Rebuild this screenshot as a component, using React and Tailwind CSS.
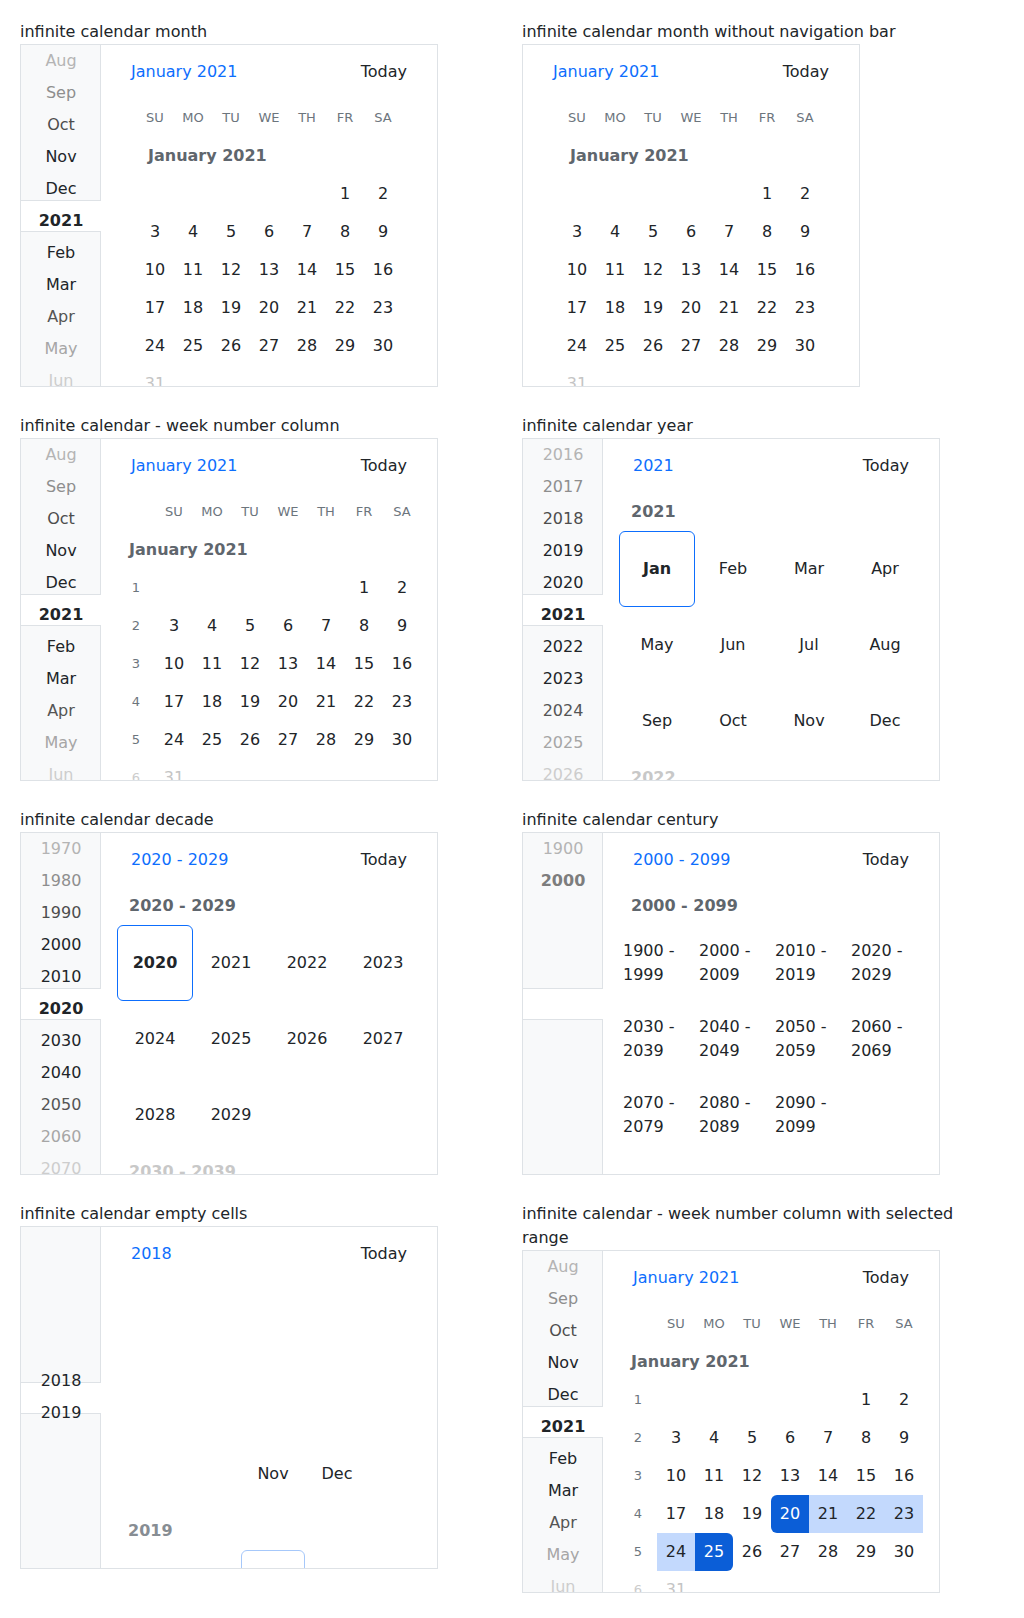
const DARK = "text-[#212529]";
const DAYS = ["SU", "MO", "TU", "WE", "TH", "FR", "SA"];
const WEEKS = [
  [0, 0, 0, 0, 0, 1, 2],
  [3, 4, 5, 6, 7, 8, 9],
  [10, 11, 12, 13, 14, 15, 16],
  [17, 18, 19, 20, 21, 22, 23],
  [24, 25, 26, 27, 28, 29, 30],
  [31, 0, 0, 0, 0, 0, 0],
];
const MONTHS = ["Jan", "Feb", "Mar", "Apr", "May", "Jun", "Jul", "Aug", "Sep", "Oct", "Nov", "Dec"];
const DECADE = ["2020", "2021", "2022", "2023", "2024", "2025", "2026", "2027", "2028", "2029"];
const CENTURY = [
  "1900 - 1999", "2000 - 2009", "2010 - 2019", "2020 - 2029",
  "2030 - 2039", "2040 - 2049", "2050 - 2059", "2060 - 2069",
  "2070 - 2079", "2080 - 2089", "2090 - 2099",
];

const MONTH_SIDE = [
  ["Aug", "text-[#b4b4b4]"],
  ["Sep", "text-[#8e8e8e]"],
  ["Oct", "text-[#4d4d4d]"],
  ["Nov", DARK],
  ["Dec", DARK],
  ["2021", "font-bold " + DARK],
  ["Feb", DARK],
  ["Mar", DARK],
  ["Apr", "text-[#555555]"],
  ["May", "text-[#a6a6a6]"],
  ["Jun", "text-[#cdcdcd]"],
];
const YEAR_SIDE = [
  ["2016", "text-[#b4b4b4]"],
  ["2017", "text-[#8e8e8e]"],
  ["2018", "text-[#4d4d4d]"],
  ["2019", DARK],
  ["2020", DARK],
  ["2021", "font-bold " + DARK],
  ["2022", DARK],
  ["2023", DARK],
  ["2024", "text-[#555555]"],
  ["2025", "text-[#a6a6a6]"],
  ["2026", "text-[#cdcdcd]"],
];
const DECADE_SIDE = [
  ["1970", "text-[#b4b4b4]"],
  ["1980", "text-[#8e8e8e]"],
  ["1990", "text-[#4d4d4d]"],
  ["2000", DARK],
  ["2010", DARK],
  ["2020", "font-bold " + DARK],
  ["2030", DARK],
  ["2040", DARK],
  ["2050", "text-[#555555]"],
  ["2060", "text-[#a6a6a6]"],
  ["2070", "text-[#cdcdcd]"],
];

function Example({ title, children }) {
  return (
    <div>
      <div className="max-w-[440px] text-base leading-6">{title}</div>
      {children}
    </div>
  );
}

function Frame({ width = "w-[418px]", children }) {
  return (
    <div className={`flex h-[343px] overflow-hidden border border-[#dee2e6] bg-white ${width}`}>
      {children}
    </div>
  );
}

function Sidebar({ items, listClass = "" }) {
  return (
    <div className="relative w-[80px] shrink-0">
      <div className="absolute inset-0 flex flex-col">
        <div className="h-[156px] border-r border-b border-[#dee2e6] bg-[#f8f9fa]" />
        <div className="h-[30px]" />
        <div className="flex-1 border-r border-t border-[#dee2e6] bg-[#f8f9fa]" />
      </div>
      <ul className={`relative ${listClass}`}>
        {items.map(([label, cls]) => (
          <li key={label} className={`flex h-8 items-center justify-center ${cls}`}>
            {label}
          </li>
        ))}
      </ul>
    </div>
  );
}

function Header({ title }) {
  return (
    <div className="flex h-[54px] items-center justify-between px-[30px]">
      <span className="text-[#0d6efd]">{title}</span>
      <span className={DARK}>Today</span>
    </div>
  );
}

function Label({ children, faded = false }) {
  return (
    <div className={`flex h-[38px] items-center pl-3 font-bold ${faded ? "text-[#c8c8c8]" : "text-[#5f666d]"}`}>
      {children}
    </div>
  );
}

function rangeClass(day) {
  if (day === 20) return "rounded-l-md bg-[#0b5ed7] text-white";
  if (day === 25) return "rounded-r-md bg-[#0b5ed7] text-white";
  if (day >= 21 && day <= 24) return "bg-[#c3d9fd]";
  return "";
}

function MonthView({ weekNumbers = false, range = false }) {
  return (
    <div className="min-w-0 flex-1">
      <Header title="January 2021" />
      <div className="flex h-[38px] items-center justify-center text-[13px] text-[#6c757d]">
        {weekNumbers && <div className="w-[38px]" />}
        {DAYS.map((d) => (
          <div key={d} className="w-[38px] text-center">{d}</div>
        ))}
      </div>
      <div className={`mx-auto ${weekNumbers ? "w-[304px]" : "w-[266px]"}`}>
        <Label>January 2021</Label>
        {WEEKS.map((week, i) => (
          <div key={i} className={`flex h-[38px] ${i === 5 ? "text-[#c4c4c4]" : DARK}`}>
            {weekNumbers && (
              <div className={`flex w-[38px] items-center justify-center text-[13px] ${i === 5 ? "text-[#cccccc]" : "text-[#6c757d]"}`}>
                {i + 1}
              </div>
            )}
            {week.map((day, j) => (
              <div
                key={j}
                className={`flex w-[38px] items-center justify-center ${range ? rangeClass(day) : ""}`}
              >
                {day || ""}
              </div>
            ))}
          </div>
        ))}
      </div>
    </div>
  );
}

function YearView() {
  return (
    <div className="min-w-0 flex-1">
      <Header title="2021" />
      <div className="mx-auto w-[304px]">
        <Label>2021</Label>
        <div className={`grid grid-cols-4 ${DARK}`}>
          {MONTHS.map((m, i) => (
            <div
              key={m}
              className={`flex h-[76px] items-center justify-center ${i === 0 ? "rounded-md border border-[#0d6efd] font-bold" : ""}`}
            >
              {m}
            </div>
          ))}
        </div>
        <Label faded>2022</Label>
      </div>
    </div>
  );
}

function DecadeView() {
  return (
    <div className="min-w-0 flex-1">
      <Header title="2020 - 2029" />
      <div className="mx-auto w-[304px]">
        <Label>2020 - 2029</Label>
        <div className={`grid grid-cols-4 ${DARK}`}>
          {DECADE.map((y, i) => (
            <div
              key={y}
              className={`flex h-[76px] items-center justify-center ${i === 0 ? "rounded-md border border-[#0d6efd] font-bold" : ""}`}
            >
              {y}
            </div>
          ))}
        </div>
        <Label faded>2030 - 2039</Label>
      </div>
    </div>
  );
}

function CenturyView() {
  return (
    <div className="min-w-0 flex-1">
      <Header title="2000 - 2099" />
      <div className="mx-auto w-[304px]">
        <Label>2000 - 2099</Label>
        <div className={`grid grid-cols-4 ${DARK}`}>
          {CENTURY.map((c) => (
            <div key={c} className="flex h-[76px] items-center p-1 text-left leading-6">
              {c}
            </div>
          ))}
        </div>
      </div>
    </div>
  );
}

function EmptyCellsView() {
  return (
    <div className="min-w-0 flex-1">
      <Header title="2018" />
      <div className="h-[155px]" />
      <div className={`grid grid-cols-[repeat(4,64px)] pl-3 ${DARK}`}>
        <div />
        <div />
        <div className="flex h-[76px] items-center justify-center">Nov</div>
        <div className="flex h-[76px] items-center justify-center">Dec</div>
      </div>
      <div className="flex h-[38px] items-center pl-[27px] font-bold text-[#878d93]">2019</div>
      <div className="grid grid-cols-[repeat(4,64px)] pl-3">
        <div />
        <div />
        <div className="h-[76px] rounded-md border border-[#a6c8fa]" />
      </div>
    </div>
  );
}

export default function App() {
  return (
    <div className="min-h-[1618px] bg-white px-5 pt-5 font-['DejaVu_Sans',sans-serif] text-[#212529]">
      <div className="grid grid-cols-[482px_482px] items-start gap-x-5 gap-y-[27px]">
        <Example title="infinite calendar month">
          <Frame>
            <Sidebar items={MONTH_SIDE} />
            <MonthView />
          </Frame>
        </Example>
        <Example title="infinite calendar month without navigation bar">
          <Frame width="w-[338px]">
            <MonthView />
          </Frame>
        </Example>

        <Example title="infinite calendar - week number column">
          <Frame>
            <Sidebar items={MONTH_SIDE} />
            <MonthView weekNumbers />
          </Frame>
        </Example>
        <Example title="infinite calendar year">
          <Frame>
            <Sidebar items={YEAR_SIDE} />
            <YearView />
          </Frame>
        </Example>

        <Example title="infinite calendar decade">
          <Frame>
            <Sidebar items={DECADE_SIDE} />
            <DecadeView />
          </Frame>
        </Example>
        <Example title="infinite calendar century">
          <Frame>
            <Sidebar
              items={[
                ["1900", "text-[#b4b4b4]"],
                ["2000", "font-bold text-[#7d7d7d]"],
              ]}
            />
            <CenturyView />
          </Frame>
        </Example>

        <Example title="infinite calendar empty cells">
          <Frame>
            <Sidebar items={[["2018", DARK], ["2019", DARK]]} listClass="pt-[138px]" />
            <EmptyCellsView />
          </Frame>
        </Example>
        <Example title="infinite calendar - week number column with selected range">
          <Frame>
            <Sidebar items={MONTH_SIDE} />
            <MonthView weekNumbers range />
          </Frame>
        </Example>
      </div>
    </div>
  );
}
